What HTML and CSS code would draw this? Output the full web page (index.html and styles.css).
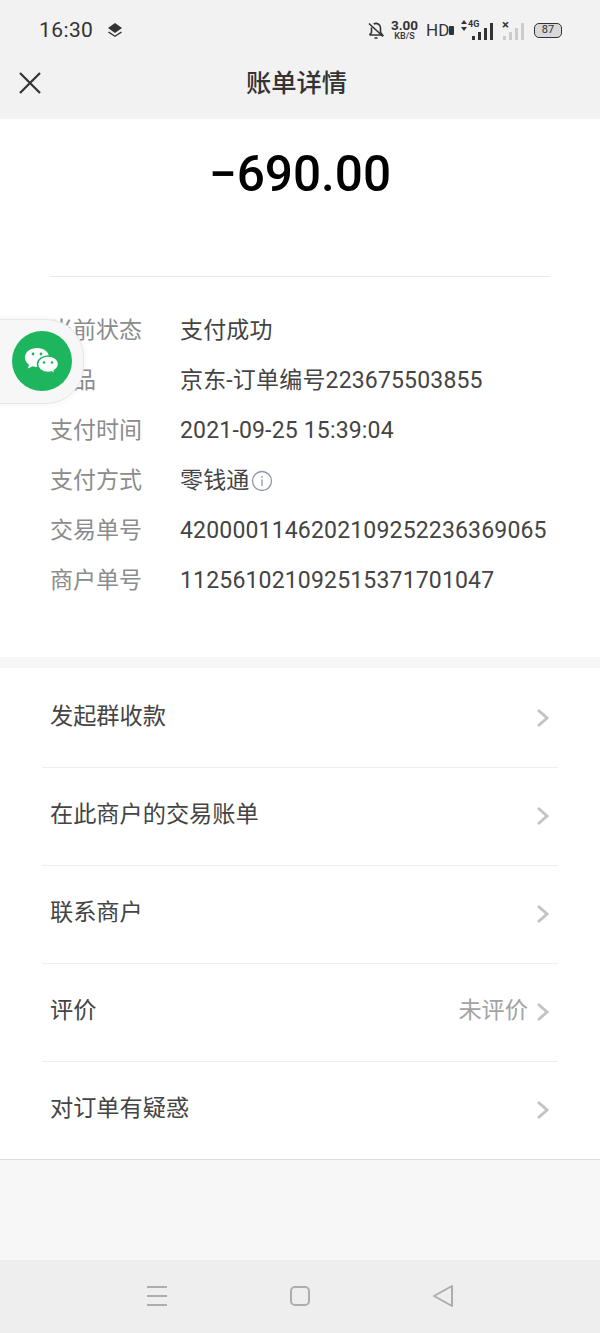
FILE: index.html
```html
<!DOCTYPE html>
<html lang="zh-CN">
<head>
    <meta charset="UTF-8">
    <meta name="viewport" content="width=device-width, initial-scale=1.0">
    <title>账单详情</title>
    <link rel="stylesheet" href="styles.css">
</head>
<body>
    <div class="phone">
        <div class="status-bar">
            <span class="clock">16:30</span>
            <svg class="layers" width="16" height="16" viewBox="0 0 16 16">
                <path d="M8 1 15 6 8 11 1 6Z" fill="#333"/>
                <path d="M2 9.500 8 13.500 14 9.500 15 10.500 8 15 1 10.500Z" fill="#333"/>
            </svg>
            <div class="status-right">
                <svg class="bell" width="18" height="20" viewBox="0 0 18 20" fill="none" stroke="#333" stroke-width="1.600">
                    <path d="M2.500 15h13l-2-2.500V8a4.500 4.500 0 0 0-6.800-3.900M4.500 7.500v5L2.500 15"/>
                    <path d="M2 3.500l14 13"/>
                    <path d="M7.500 18h3"/>
                </svg>
                <div class="speed"><span class="speed-num">3.00</span><span class="speed-unit">KB/S</span></div>
                <span class="hd">HD<i></i></span>
                <div class="signal">
                    <svg class="updown" width="6" height="11" viewBox="0 0 6 11"><path d="M3 0 6 4H0ZM3 11 0 7H6Z" fill="#333"/></svg>
                    <span class="net">4G</span>
                    <i class="b1"></i><i class="b2"></i><i class="b3"></i><i class="b4"></i>
                </div>
                <div class="signal off">
                    <span class="net">×</span>
                    <i class="b1"></i><i class="b2"></i><i class="b3"></i><i class="b4"></i>
                </div>
                <div class="battery"><span>87</span></div>
            </div>
        </div>

        <header class="nav">
            <svg class="close" width="24" height="24" viewBox="0 0 24 24" fill="none" stroke="#333" stroke-width="2.200">
                <path d="M2 2 22 22M22 2 2 22"/>
            </svg>
            <h1>账单详情</h1>
        </header>

        <section class="detail">
            <div class="amount">−690.00</div>
            <div class="rows">
                <div class="row"><span class="label">当前状态</span><span class="value">支付成功</span></div>
                <div class="row"><span class="label">商品</span><span class="value">京东-订单编号223675503855</span></div>
                <div class="row"><span class="label">支付时间</span><span class="value">2021-09-25 15:39:04</span></div>
                <div class="row">
                    <span class="label">支付方式</span>
                    <span class="value">零钱通</span>
                    <svg class="info" width="22" height="22" viewBox="0 0 22 22" fill="none" stroke="#8d98a3" stroke-width="1.300">
                        <circle cx="11" cy="11" r="9.500"/>
                        <path d="M11 9.500v6.500M11 6v1.800"/>
                    </svg>
                </div>
                <div class="row"><span class="label">交易单号</span><span class="value">4200001146202109252236369065</span></div>
                <div class="row"><span class="label">商户单号</span><span class="value">112561021092515371701047</span></div>
            </div>
        </section>

        <section class="menu">
            <div class="item"><span>发起群收款</span><svg class="chev" width="14" height="20" viewBox="0 0 14 20" fill="none" stroke="#c4c4c4" stroke-width="3"><path d="M2 2 11 10 2 18"/></svg></div>
            <div class="item"><span>在此商户的交易账单</span><svg class="chev" width="14" height="20" viewBox="0 0 14 20" fill="none" stroke="#c4c4c4" stroke-width="3"><path d="M2 2 11 10 2 18"/></svg></div>
            <div class="item"><span>联系商户</span><svg class="chev" width="14" height="20" viewBox="0 0 14 20" fill="none" stroke="#c4c4c4" stroke-width="3"><path d="M2 2 11 10 2 18"/></svg></div>
            <div class="item"><span>评价</span><span class="note">未评价</span><svg class="chev" width="14" height="20" viewBox="0 0 14 20" fill="none" stroke="#c4c4c4" stroke-width="3"><path d="M2 2 11 10 2 18"/></svg></div>
            <div class="item"><span>对订单有疑惑</span><svg class="chev" width="14" height="20" viewBox="0 0 14 20" fill="none" stroke="#c4c4c4" stroke-width="3"><path d="M2 2 11 10 2 18"/></svg></div>
        </section>

        <div class="filler"></div>

        <footer class="sys-nav">
            <svg width="22" height="22" viewBox="0 0 22 22" fill="none" stroke="#adadad" stroke-width="1.800"><path d="M1 2h20M1 11h20M1 20h20"/></svg>
            <svg width="22" height="22" viewBox="0 0 22 22" fill="none" stroke="#adadad" stroke-width="2"><rect x="2" y="2" width="18" height="18" rx="4"/></svg>
            <svg width="22" height="24" viewBox="0 0 22 24" fill="none" stroke="#adadad" stroke-width="2" stroke-linejoin="round"><path d="M20 2 2 12 20 22Z"/></svg>
        </footer>

        <div class="float-ball">
            <div class="ball">
                <svg width="36" height="28" viewBox="0 0 36 28">
                    <path d="M13 1C6 1 1 5 1 10.500c0 3 1.500 5.500 4 7.300L4 21.500l4.500-2.200c1.400.4 3 .7 4.500.7 7 0 12-4 12-9.500S20 1 13 1Z" fill="#fff"/>
                    <path d="M24 9c-5.800 0-10.500 3.600-10.500 8.200s4.700 8.200 10.500 8.200c1.200 0 2.400-.2 3.500-.5l3.500 2-.8-3.200c2.300-1.500 4.300-3.800 4.300-6.500C35 12.600 29.800 9 24 9Z" fill="#fff" stroke="#1db65e" stroke-width="1.500"/>
                    <circle cx="9" cy="7" r="1.400" fill="#1db65e"/>
                    <circle cx="17" cy="7" r="1.400" fill="#1db65e"/>
                    <circle cx="20" cy="15.500" r="1.300" fill="#1db65e"/>
                    <circle cx="28" cy="15.500" r="1.300" fill="#1db65e"/>
                </svg>
            </div>
        </div>
    </div>
</body>
</html>
```

FILE: styles.css
```css
* {
    box-sizing: border-box;
}
body {
    margin: 0;
    padding: 0;
    background-color: #f7f7f7;
    font-family: Roboto, "Noto Sans CJK SC", sans-serif;
    color: #333;
}
.phone {
    position: relative;
    width: 600px;
    height: 1333px;
    display: flex;
    flex-direction: column;
    overflow: hidden;
}

/* status bar */
.status-bar {
    height: 60px;
    background: #f2f2f2;
    display: flex;
    align-items: center;
    padding: 0 38px 0 39px;
}
.clock {
    font-size: 21px;
    letter-spacing: 0.4px;
}
.layers {
    margin-left: 14px;
}
.status-right {
    margin-left: auto;
    display: flex;
    align-items: center;
}
.speed {
    display: flex;
    flex-direction: column;
    align-items: center;
    width: 25px;
    margin-left: 7px;
    line-height: 1;
    font-weight: 700;
}
.speed-num {
    font-size: 13.500px;
}
.speed-unit {
    font-size: 9px;
    font-weight: 500;
}
.hd {
    width: 28px;
    margin-left: 9px;
    font-size: 17px;
    display: flex;
    align-items: flex-end;
    line-height: 20px;
}
.hd i {
    width: 5px;
    height: 9px;
    margin: 0 0 5px 0;
    background: #333;
    border-radius: 1px;
}
.signal {
    display: flex;
    align-items: flex-end;
    gap: 3px;
    width: 32px;
    height: 20px;
    margin-left: 7px;
    position: relative;
    padding-left: 11px;
}
.signal i {
    display: block;
    width: 3px;
    background: #333;
}
.signal .b1 { height: 4px; }
.signal .b2 { height: 8px; }
.signal .b3 { height: 12px; }
.signal .b4 { height: 17px; }
.signal.off i {
    background: #ccc;
}
.updown {
    position: absolute;
    left: 0;
    top: 0;
}
.net {
    position: absolute;
    left: 7px;
    top: -1px;
    font-size: 9px;
    font-weight: 700;
    line-height: 11px;
    white-space: nowrap;
}
.signal.off {
    width: 22px;
    margin-left: 9px;
    padding-left: 1px;
}
.signal.off .net {
    left: 0;
    font-size: 13px;
}
.battery {
    margin-left: 10px;
    width: 28px;
    height: 15px;
    border: 1.500px solid #333;
    border-radius: 5px;
    background: #d8d8d8;
    font-size: 11px;
    line-height: 12px;
    text-align: center;
}

/* title bar */
.nav {
    height: 59px;
    background: #f2f2f2;
    display: flex;
    align-items: center;
    justify-content: center;
    position: relative;
}
.nav h1 {
    margin: 0 7px 12px 0;
    font-size: 25.300px;
    font-weight: 500;
    line-height: 48px;
}
.close {
    position: absolute;
    left: 18px;
    top: 11px;
}

/* amount and detail rows */
.detail {
    height: 538px;
    background: #fff;
    padding: 0 50px;
}
.amount {
    height: 158px;
    border-bottom: 1px solid #e8e8e8;
    padding-top: 24px;
    text-align: center;
    font-size: 49.500px;
    font-weight: 500;
    line-height: 62px;
    color: #000;
}
.rows {
    padding-top: 29px;
}
.row {
    height: 50px;
    display: flex;
    align-items: center;
    font-size: 23px;
    line-height: 30px;
    white-space: nowrap;
}
.label {
    width: 130px;
    color: #8c8c8c;
}
.value {
    color: #444;
    letter-spacing: 0.17px;
}
.info {
    margin-left: 1px;
}

/* menu list */
.menu {
    margin-top: 11px;
    height: 492px;
    background: #fff;
    padding: 2px 42px 0;
    border-bottom: 1px solid #ddd;
}
.item {
    height: 98px;
    display: flex;
    align-items: center;
    padding: 0 8px 6px;
    font-size: 23.200px;
    line-height: 30px;
    color: #444;
    border-bottom: 1px solid #eee;
}
.item:last-child {
    border-bottom: 0;
}
.item span:first-child {
    margin-right: auto;
}
.note {
    color: #a3a3a3;
    margin-right: 8px;
}
.chev {
    margin-top: 4px;
}
.filler {
    flex: 1;
    background: #f7f7f7;
}
.sys-nav {
    height: 73px;
    background: #eee;
    display: flex;
    align-items: center;
    justify-content: space-between;
    padding: 0 146px 2px;
}

/* floating bubble over the rows */
.float-ball {
    position: absolute;
    left: -40px;
    top: 319px;
    width: 124px;
    height: 85px;
    border-radius: 38px;
    background: #f7f7f7;
    border: 1px solid #e6e6e6;
    box-shadow: 0 0 8px rgba(0, 0, 0, 0.05);
    padding: 11px 0 0 51px;
}
.ball {
    width: 60px;
    height: 60px;
    border-radius: 50%;
    background: #1db65e;
    display: flex;
    align-items: center;
    justify-content: center;
}
```
